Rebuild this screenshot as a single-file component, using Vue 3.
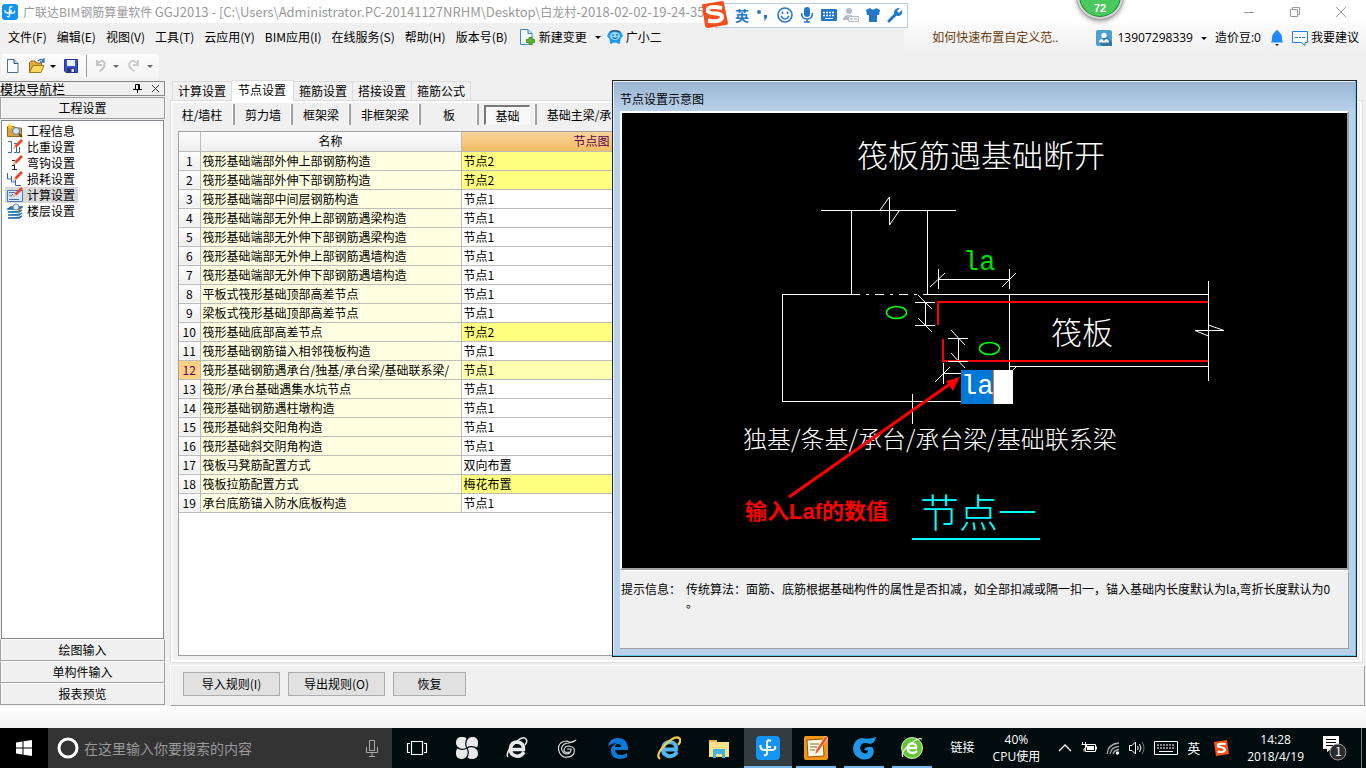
<script setup>
import { ref } from 'vue'

const menus = ['文件(F)', '编辑(E)', '视图(V)', '工具(T)', '云应用(Y)', 'BIM应用(I)', '在线服务(S)', '帮助(H)', '版本号(B)']
const navItems = ['工程信息', '比重设置', '弯钩设置', '损耗设置', '计算设置', '楼层设置']
const navButtons = ['绘图输入', '单构件输入', '报表预览']
const tabs = ['计算设置', '节点设置', '箍筋设置', '搭接设置', '箍筋公式']
const members = [
  { name: '柱/墙柱', size: 'm' },
  { name: '剪力墙', size: 'm' },
  { name: '框架梁', size: 'm' },
  { name: '非框架梁', size: 'l' },
  { name: '板', size: 'm' },
  { name: '基础', size: 'm', on: true },
  { name: '基础主梁/承台梁', size: 'xl' }
]
const rows = [
  ['筏形基础端部外伸上部钢筋构造', '节点2', 'hot'],
  ['筏形基础端部外伸下部钢筋构造', '节点2', 'hot'],
  ['筏形基础端部中间层钢筋构造', '节点1'],
  ['筏形基础端部无外伸上部钢筋遇梁构造', '节点1'],
  ['筏形基础端部无外伸下部钢筋遇梁构造', '节点1'],
  ['筏形基础端部无外伸上部钢筋遇墙构造', '节点1'],
  ['筏形基础端部无外伸下部钢筋遇墙构造', '节点1'],
  ['平板式筏形基础顶部高差节点', '节点1'],
  ['梁板式筏形基础顶部高差节点', '节点1'],
  ['筏形基础底部高差节点', '节点2', 'hot'],
  ['筏形基础钢筋锚入相邻筏板构造', '节点1'],
  ['筏形基础钢筋遇承台/独基/承台梁/基础联系梁/', '节点1', 'current'],
  ['筏形/承台基础遇集水坑节点', '节点1'],
  ['筏形基础钢筋遇柱墩构造', '节点1'],
  ['筏形基础斜交阳角构造', '节点1'],
  ['筏形基础斜交阴角构造', '节点1'],
  ['筏板马凳筋配置方式', '双向布置'],
  ['筏板拉筋配置方式', '梅花布置', 'hot'],
  ['承台底筋锚入防水底板构造', '节点1']
]
const anchor = ref('la')
const query = ref('')
</script>

<template>
  <div class="screen">
    <header class="title">
      <svg class="i16" viewBox="0 0 16 16"><rect width="16" height="16" rx="3" fill="#1494f0" /><path d="M10.500 3Q7.500 2 7.500 5V11Q7.500 13.500 5 12.500M3 6V7.500Q3.500 9 6 9H10.500Q13.500 9 12.500 6.500M7.500 7H10" fill="none" stroke="#fff" stroke-width="1.300" /></svg>
      <h1>广联达BIM钢筋算量软件 <span>GGJ2013 - [C:\Users\Administrator.PC-20141127NRHM\Desktop\</span>白龙村<span>-2018-02-02-19-24-35</span></h1>
      <div class="winbtns">
        <button aria-label="最小化"><svg viewBox="0 0 12 12"><path d="M1 6.500H11" /></svg></button>
        <button aria-label="还原"><svg viewBox="0 0 12 12"><path d="M1.500 3.500H8.500V10.500H1.500ZM3.500 3V1.500H10.500V8.500H9" /></svg></button>
        <button aria-label="关闭"><svg viewBox="0 0 12 12"><path d="M1 1 11 11M11 1 1 11" /></svg></button>
      </div>
    </header>

    <nav class="menubar">
      <button v-for="m in menus" :key="m">{{ m }}</button>
      <button class="withicon change">
        <svg class="i16" viewBox="0 0 16 16"><path d="M1.500.500H9L13 4.500V15.500H1.500Z" fill="#f2f9fe" stroke="#3b87b7" /><path d="M9 .500V4.500H13" fill="#c8e3f3" stroke="#3b87b7" /><path d="M8.500 9.500H14L13 15.500H8.500Z" fill="#f0f0f0" /><path d="M10 8.500h3v2h2.500v3H13v2.500h-3v-2.500H7.500v-3H10Z" fill="#5bb82b" stroke="#338716" stroke-width=".800" /></svg>
        新建变更<i class="caret"></i>
      </button>
      <button class="withicon">
        <svg class="i16" viewBox="0 0 16 16"><path d="M2 3Q8-1 14 3L16 7 13.500 10 13 14Q12 16 10.500 14L8 13.500 5.500 14Q4 16 3 14L2.500 10L0 7Z" fill="#1e9bea" /><ellipse cx="8" cy="7" rx="5" ry="4" fill="#8fd7ff" /><path d="M3 3Q8 .500 13 3" stroke="#3b5c75" stroke-width="1.500" fill="none" /><path d="M6 5V7M10 5V7M5.500 8.500Q8 10.500 10.500 8.500" stroke="#14567e" fill="none" /></svg>
        广小二
      </button>
      <div class="account">
        <a href="#" class="tip">如何快速布置自定义范..</a>
        <button class="withicon user">
          <svg class="i16" viewBox="0 0 16 16"><rect width="16" height="16" rx="2" fill="#4aa0d0" /><path d="M10 6 16 12V16H6L3 12Z" fill="#32779e" /><circle cx="8" cy="5.500" r="2.700" fill="#fff" /><path d="M3 12.500Q3 9 6 9L8 11 10 9Q13 9 13 12.500Z" fill="#fff" /></svg>
          <span>13907298339</span><i class="caret"></i>
        </button>
        <span class="beans">造价豆:0</span>
        <svg class="bell" viewBox="0 0 14 16"><path d="M7 0Q9 1 9 2 12 4 12 8 12 11 13 12.500H1Q2 11 2 8 2 4 5 2 5 1 7 0Z" fill="#1e8af4" /><path d="M5 14H9L7 16Z" fill="#222" /></svg>
        <button class="withicon">
          <svg class="i16" viewBox="0 0 16 16"><path d="M.500 1.500H15.500V12.500H13V15.500L9.500 12.500H.500Z" fill="#fff" stroke="#2580df" /><path d="M3 7.500H6M7 7.500H9M10 7.500H13" stroke="#2580df" /></svg>
          我要建议
        </button>
      </div>
    </nav>

    <div class="toolrow">
      <div class="toolbar">
        <button aria-label="新建"><svg class="i16" viewBox="0 0 16 16"><path d="M2.500 1.500H9L13 5.500V14.500H2.500Z" fill="#f7fbff" stroke="#536b86" /><path d="M9 1.500V5.500H13" fill="#b8d5ef" stroke="#2f5279" /></svg></button>
        <button class="drop" aria-label="打开"><svg class="i18" viewBox="0 0 18 16"><path d="M1.500 14.500V4.500L3 3H7L8.500 5H13.500V7.500" fill="#e1ad32" stroke="#8b6a25" /><path d="M1.500 14.500 5 7.500H16L13 14.500Z" fill="#fbd75e" stroke="#a17822" /><path d="M10 3Q13 0 15.500 3M16 0V4H12" fill="none" stroke="#376da7" stroke-width="1.300" /></svg><i class="caret"></i></button>
        <button aria-label="保存"><svg class="i16" viewBox="0 0 16 16"><path d="M1.500 1.500H14.500V14.500H3L1.500 13Z" fill="#3a52c9" stroke="#263690" /><path d="M4 2H12V8H4Z" fill="#e9efff" /><path d="M4 10H12V15H4Z" fill="#27337d" /><path d="M8.500 11H11V14H8.500Z" fill="#dbe4ff" /></svg></button>
        <i class="bar"></i>
        <button class="drop off" aria-label="撤销"><svg class="i16" viewBox="0 0 16 16"><path d="M5 2V7H10M5 6.500Q10 0 12.500 5 13.500 10 7.500 13" fill="none" stroke="#c4c4c4" stroke-width="2" /></svg><i class="caret"></i></button>
        <button class="drop off" aria-label="重做"><svg class="i16" viewBox="0 0 16 16"><path d="M12 2V7H7M12 6.500Q7 0 3.500 5 2 10 8.500 13" fill="none" stroke="#cdcdcd" stroke-width="2" /></svg><i class="caret"></i></button>
      </div>
    </div>

    <main class="work">
      <aside class="side">
        <div class="sidehead"><span>模块导航栏</span>
          <svg class="pin" viewBox="0 0 9 9"><path d="M2.500 5V.500H6.500V5M5.500 1V5M0 5.500H9M4.500 6V9" stroke="#000" fill="none" /></svg>
          <svg class="pin" viewBox="0 0 9 9"><path d="M1 1 8 8M8 1 1 8" stroke="#333" fill="none" /></svg>
        </div>
        <button class="navbtn">工程设置</button>
        <ul class="navlist">
          <li v-for="(n, i) in navItems" :key="n" :class="{ on: i === 4 }">
            <button>
              <svg class="i16" viewBox="0 0 16 16">
                <template v-if="i === 0"><path d="M.500 3.500H7L8.500 5H14.500V13.500H.500Z" fill="#dba53c" stroke="#8c6a2c" /><path d="M3 0V6M0 3H6M1 1 5 5M5 1 1 5" stroke="#ffd52c" /><circle cx="9" cy="8" r="3.500" fill="#cfe7ff" stroke="#5c718d" /><path d="M12 11 15 14" stroke="#5b4632" stroke-width="2" /></template>
                <template v-else-if="i === 1"><path d="M1 2.500H4.500V13.500H1M7 4.500H9.500V13.500H7M10 13.500H12.500V8" fill="none" stroke="#3767a8" /></template>
                <template v-else-if="i === 2"><path d="M5 5.500H8M7.500 8V15M5 10.500H8M5 14.500H10" fill="none" stroke="#222" /></template>
                <template v-else-if="i === 3"><path d="M.500 2V8H4M4.500 5V11H8M8.500 9V14.500H14" fill="none" stroke="#2f66b4" /></template>
                <template v-else-if="i === 4"><path d="M.500 3.500H15.500V14.500H.500Z" fill="#d8e9fb" stroke="#4878bd" /><path d="M2 5.500H8M2 7.500 4 9.500 6 7M2 12.500H12" stroke="#4072b5" fill="none" /></template>
                <template v-else><path d="M1 6 4 4H15L12 6ZM1 9H12L15 7M1 12H12L15 10M1 15H12L15 13" fill="#65b4e7" stroke="#19659e" stroke-width="1.500" /><circle cx="9" cy="4" r="3" fill="#dcecff" stroke="#7b8ea5" /><path d="M11 6 14 8" stroke="#a07650" stroke-width="2" /></template>
                <path v-if="i > 0 && i < 5" d="M6 10 8 6 14 0 16 2 10 8Z" fill="#e6442d" /><path v-if="i > 0 && i < 5" d="M6 10 7.500 6.500 9.500 8.500Z" fill="#edc894" />
              </svg>
              <span>{{ n }}</span>
            </button>
          </li>
        </ul>
        <button v-for="n in navButtons" :key="n" class="navbtn">{{ n }}</button>
      </aside>

      <section class="content">
        <div class="tabs">
          <button v-for="(t, i) in tabs" :key="t" :class="{ on: i === 1 }">{{ t }}</button>
        </div>
        <div class="panel">
          <div class="members">
            <button v-for="m in members" :key="m.name" :class="[m.size, { on: m.on }]"><span>{{ m.name }}</span></button>
          </div>
          <div class="gridbox">
            <table>
              <colgroup><col class="cnum" /><col class="cname" /><col class="cname" /></colgroup>
              <thead><tr><th></th><th>名称</th><th class="pick">节点图</th></tr></thead>
              <tbody>
                <tr v-for="(r, i) in rows" :key="i" :class="r[2]">
                  <th>{{ i + 1 }}</th><td class="name">{{ r[0] }}</td><td>{{ r[1] }}</td>
                </tr>
              </tbody>
            </table>
          </div>
        </div>
        <div class="actions">
          <button>导入规则(I)</button><button>导出规则(O)</button><button class="small">恢复</button>
        </div>
      </section>

      <section class="dialog" role="dialog" aria-label="节点设置示意图">
        <h2>节点设置示意图</h2>
        <div class="canvas">
          <svg class="cad" viewBox="622 113 725 454" preserveAspectRatio="xMinYMin meet">
            <g fill="none" stroke="#fff" stroke-width="1">
              <path shape-rendering="crispEdges" d="M821 210.500H956M889.500 197V225M851.500 211V294M927.500 211V294M851 294.500H782.500V401.500H961M851 294.500H860M866 294.500H869M875 294.500H884M890 294.500H893M899 294.500H908M914 294.500H917M923 294.500H1208M1009.500 294V370M1009 366.500H1208M1208.500 281V381M1195 330.500H1224M938.500 269V289M1009.500 269V289M938 279.500H1010M915 302.500H935M915 325.500H935M925.500 302V326M948 338.500H968M958.500 338V362M943.500 363V384M943 373.500H961M912.500 394V424" />
              <path d="M880 210 889.500 197M889.500 225 899 211M1195 330.500 1208.500 336M1208.500 325 1224 330.500M930 287 945 273M1002 287 1016 273M918 295 932 309M918 318 932 332M951 330 965 345M951 353 965 368M935 382 950 367M1012 371 1016 367" />
            </g>
            <path d="M938 325V302H1208M943 339V361H1208" fill="none" stroke="#f00" stroke-width="2" shape-rendering="crispEdges" />
            <path d="M948 361.500H968" stroke="#fff" shape-rendering="crispEdges" />
            <g fill="none" stroke="#0f0" stroke-width="1.500"><ellipse cx="896.500" cy="312.500" rx="10" ry="6" /><ellipse cx="989.500" cy="348.500" rx="10" ry="6" /></g>
            <text class="t31" x="857" y="167">筏板筋遇基础断开</text>
            <text class="t31" x="1051" y="344">筏板</text>
            <text class="t24" x="743" y="448">独基/条基/承台/承台梁/基础联系梁</text>
            <text class="la" x="963" y="270">la</text>
            <text class="t39" x="920" y="527">节点一</text>
            <path d="M912 539H1040" stroke="#0ff" stroke-width="2" />
            <path d="M789 497 950 384" stroke="#f00" stroke-width="3" />
            <path d="M960 377 946 381 953 391Z" fill="#f00" />
            <text class="red" x="745" y="519">输入Laf的数值</text>
            <foreignObject x="961" y="370" width="52" height="34"><input v-model="anchor" class="anchor" aria-label="锚固长度" /></foreignObject>
          </svg>
        </div>
        <div class="info"><span>提示信息：</span><p>传统算法：面筋、底筋根据基础构件的属性是否扣减，如全部扣减或隔一扣一，锚入基础内长度默认为la,弯折长度默认为0<br />。</p></div>
      </section>
    </main>

    <div class="desk"></div>

    <footer class="taskbar">
      <button class="start" aria-label="开始"><svg class="i16" viewBox="0 0 16 16"><path d="M0 2.500 6.500 1.500V7.500H0ZM7.500 1.300 16 0V7.500H7.500ZM0 8.500H6.500V14.500L0 13.500ZM7.500 8.500H16V16L7.500 14.700Z" fill="#fff" /></svg></button>
      <label class="search">
        <svg class="i22" viewBox="0 0 22 22"><circle cx="11" cy="11" r="9" fill="none" stroke="#fff" stroke-width="3" /></svg>
        <input v-model="query" placeholder="在这里输入你要搜索的内容" aria-label="搜索" />
        <svg class="mic" viewBox="0 0 12 17"><path d="M3.500.500H8.500V10.500H3.500ZM.500 7V12.500H11.500V7M6 13V16.500M3 16.500H9" fill="none" stroke="#aaa" /></svg>
      </label>
      <div class="apps">
        <button aria-label="任务视图"><svg class="i22" viewBox="0 0 22 22"><path d="M5.500 4.500H16.500V17.500H5.500ZM4 6.500H1.500V15.500H4M18 6.500H20.500V15.500H18" fill="none" stroke="#fff" stroke-width="1.200" /></svg></button>
        <button aria-label="风车"><svg class="i22" viewBox="0 0 22 22"><g fill="#e9e9e9"><rect x="0" y="0" width="12" height="11" rx="5" /><rect x="11" y="0" width="11" height="12" rx="5" /><rect x="10" y="11" width="12" height="11" rx="5" /><rect x="0" y="10" width="11" height="12" rx="5" /><path d="M6 6H16V16H6Z" /></g><path d="M11 11Q8 6 12 0M11 11Q16 8 22 12M11 11Q14 16 10 22M11 11Q6 14 0 10" fill="none" stroke="#010c0f" stroke-width="1.200" /></svg></button>
        <button aria-label="浏览器"><svg class="i22" viewBox="0 0 22 22"><path d="M18 15Q15 20 10 19 4 18 4.500 11.500 5 5 11.500 5 18 6 17.500 12.500H6" fill="none" stroke="#e9e9e9" stroke-width="3.500" /><path d="M2 20Q-1 16 8 7T20 2Q22 4 19 8" fill="none" stroke="#e9e9e9" stroke-width="1.500" /></svg></button>
        <button aria-label="广联达"><svg class="i22" viewBox="0 0 22 22"><path d="M20 3Q16 7 11 4 4 4 2.500 10 2 17 8 20 16 21 18 16 20 10 13 9 8 9 8 14 9 16 13 15M18 4 13 6Q7 6 5.500 11 6 16 10 17 15 17 15 12H11" fill="none" stroke="#ddd" stroke-width="1.200" /></svg></button>
        <button class="edge" aria-label="Edge"><svg class="i22" viewBox="0 0 22 22"><path d="M1 10Q2 1 11 1 21 1 21 13H8Q9 18 14 18 18 18 20 16V20Q17 22 12 22 3 21 4 12 5 8 10 6 4 6 1 10ZM8 10H14Q14 7 11 7T8 10Z" fill="#0b79d5" fill-rule="evenodd" /></svg></button>
        <button aria-label="Internet Explorer"><svg class="i24" viewBox="0 0 24 24"><path d="M20 16Q17 21 11 20 5 18 6 12 7 6 13 6 20 7 19 13.500H7" fill="none" stroke="#54b4ef" stroke-width="4" /><path d="M3 23Q-2 19 8 9T22 2Q25 4 21 9" fill="none" stroke="#f5ce42" stroke-width="2.200" /></svg></button>
        <button aria-label="资源管理器"><svg class="i22" viewBox="0 0 22 22"><path d="M1 3H9V5H21V20H1Z" fill="#fbe08a" /><path d="M1 3H9V5H1Z" fill="#e9b43e" /><path d="M5 12H17V21H14V17H8V21H5Z" fill="#3fb3e4" /></svg></button>
        <button class="run active" aria-label="钢筋算量"><svg class="i24" viewBox="0 0 24 24"><rect width="24" height="24" rx="4" fill="#1494f5" /><path d="M15 5Q11 3 11 7V17Q11 20 8 19M4.500 9V11Q5 14 9 14H16Q20 14 19 10M11 11H15" fill="none" stroke="#fff" stroke-width="2" /></svg></button>
        <button class="run" aria-label="便笺"><svg class="i24" viewBox="0 0 24 24"><rect width="24" height="24" rx="2" fill="#f19716" /><path d="M3 4 19 3 20 20 4 21Z" fill="#fff8dc" stroke="#964f10" /><path d="M6 8H15M6 11H13M6 14H11" stroke="#7e6a50" /><path d="M24 2 14 16 11 19 12 14 21 0Z" fill="#ee5627" stroke="#fff" stroke-width=".500" /></svg></button>
        <button class="run" aria-label="广联达云"><svg class="i24" viewBox="0 0 24 24"><path d="M24 1Q23 7 18 8 9 5 8 12 9 17 13 17.500 16 17 16 14.500L12 14Q14 10 20 11 23 14 21 19 17 25 9 23 1 20 1 12 2 3 10 2 16 4 24 1Z" fill="#2296e6" /></svg></button>
        <button class="run" aria-label="安全浏览器"><svg class="i22" viewBox="0 0 22 22"><circle cx="11" cy="11" r="10.500" fill="#67c637" stroke="#d5f2bc" /><path d="M16 14Q13 17 9.500 15.500 6 14 7 10 8 6 12 6.500 16 8 15 11H8" fill="none" stroke="#fff" stroke-width="2.300" /><path d="M2 20Q-1 16 8 8T21 2" fill="none" stroke="#f5fff0" stroke-width="1.200" /></svg></button>
      </div>
      <div class="tray">
        <span class="links">链接</span>
        <span class="cpu">40%<br />CPU使用</span>
        <svg class="i14" viewBox="0 0 14 14"><path d="M1 10 7 4 13 10" fill="none" stroke="#fff" stroke-width="1.300" /></svg>
        <svg class="i16" viewBox="0 0 16 16"><path d="M4.500 4.500H14.500V11.500H4.500ZM15.500 6.500V9.500M1.500 2V4M4.500 2V4M.500 4.500H5.500V7L3 9V11.500" fill="none" stroke="#fff" /><path d="M6 6H13V10H6Z" fill="#fff" /></svg>
        <svg class="i14" viewBox="0 0 14 14"><path d="M1 13Q2 3 13 2M4 13Q5 6 13 5.500M7 13Q8 9 13 8.500" fill="none" stroke="#aaa" stroke-width="1.300" /><circle cx="11.500" cy="12" r="1.700" fill="#fff" /></svg>
        <svg class="i16" viewBox="0 0 16 16"><path d="M.500 5.500H3L6.500 2V14L3 10.500H.500ZM8.500 6Q10 8 8.500 10M10.500 4Q13.500 8 10.500 12" fill="none" stroke="#fff" /><path d="M13 2Q17 8 13 14" fill="none" stroke="#777" /></svg>
        <svg class="kbd" viewBox="0 0 24 14"><path d="M.500.500H23.500V13.500H.500Z" fill="none" stroke="#fff" /><path d="M3 4H21M3 7H21" stroke="#fff" stroke-dasharray="2 1" /><path d="M5 10.500H19" stroke="#fff" /></svg>
        <span class="ime">英</span>
        <svg class="i16" viewBox="0 0 16 16"><path d="M1 2 14 0 16 14 3 16Z" fill="#f5531c" /><path d="M12.500 4Q4 3 5 6.500 12 7.500 12 10 11 13 4.500 11.500" fill="none" stroke="#fff" stroke-width="2.200" /></svg>
        <span class="clock">14:28<br />2018/4/19</span>
        <svg class="note" viewBox="0 0 26 26"><path d="M1 1H17V14H9L5 17V14H1Z" fill="#fff" /><path d="M4 4.500H14M4 7.500H14M4 10.500H14" stroke="#000" /><circle cx="16" cy="17" r="8" fill="#2b2b2b" stroke="#999" /><text x="13" y="21">1</text></svg>
        <i class="peek"></i>
      </div>
    </footer>

    <div class="ball">72</div>
    <div class="sogou">
      <svg class="slogo" viewBox="0 0 28 28"><path d="M1 4Q1 3 3 3L21 0Q23 0 23 2L27 22Q27 24 25 24L7 27Q5 27 4 25Z" fill="#f0501e" /><path d="M21 7Q5 4 7 10.500 8 12 15 12.500 22 13 21 17 18 22 7 19.500" fill="none" stroke="#fff" stroke-width="4" /></svg>
      <b>英</b>
      <svg class="i16" viewBox="0 0 16 16"><circle cx="4" cy="5" r="2" fill="#2277c9" /><path d="M9 8H12V11L9 14Q10 12 9 10Z" fill="#2277c9" /></svg>
      <svg class="i16" viewBox="0 0 16 16"><circle cx="8" cy="8" r="7" fill="none" stroke="#2277c9" stroke-width="1.600" /><path d="M5.500 4.500V7M10.500 4.500V7M4 9Q8 15 12 9" fill="none" stroke="#2277c9" stroke-width="1.500" /></svg>
      <svg class="i16" viewBox="0 0 16 16"><rect x="5" y="0" width="6" height="10" rx="3" fill="#2277c9" /><path d="M2.500 6Q2.500 12 8 12T13.500 6M8 12V15M5 15H11" fill="none" stroke="#2277c9" stroke-width="1.500" /></svg>
      <svg class="i16" viewBox="0 0 16 16"><rect y="2" width="16" height="12" rx="1" fill="#2277c9" /><path d="M2 5.500H14M2 8.500H14" stroke="#fff" stroke-width="1.500" stroke-dasharray="2 1" /><path d="M4 11.500H12" stroke="#fff" /></svg>
      <svg class="i16" viewBox="0 0 16 16"><circle cx="6" cy="4" r="3" fill="#b0bccb" /><path d="M0 13Q0 8 6 8T11 13Z" fill="#b0bccb" /><path d="M5.500 9.500H15.500V14.500H5.500Z" fill="#fff" stroke="#b0bccb" /><path d="M7 12H10M11 12H14" stroke="#9aa8b8" /></svg>
      <svg class="i16" viewBox="0 0 16 16"><path d="M1 3 5 1Q8 4 11 1L15 3 14 8H12V15H4V8H2Z" fill="#2277c9" /></svg>
      <svg class="i16" viewBox="0 0 16 16"><path d="M2 14 9 7" stroke="#2277c9" stroke-width="3" stroke-linecap="round" /><path d="M13 1 10 4 12 6 15 3Q16 8 12 9 8 9 7 6 7 1 13 1Z" fill="#2277c9" /></svg>
    </div>
  </div>
</template>

<style>
body { margin: 0; background: #f0f0f0; }
</style>

<style scoped>
* { box-sizing: border-box; }
.screen { position: relative; min-height: 100vh; display: flex; flex-direction: column; overflow: hidden; background: #f0f0f0; color: #000; font: 12px/16px "Noto Sans CJK SC", sans-serif; }
button { font: inherit; color: inherit; background: none; border: 0; padding: 0; white-space: nowrap; }
svg { flex: none; display: block; }
.i14 { width: 14px; height: 14px; }
.i16 { width: 16px; height: 16px; }
.i18 { width: 18px; height: 16px; }
.i22 { width: 22px; height: 22px; }
.i24 { width: 24px; height: 24px; }
.caret { border: 3px solid transparent; border-top-color: #000; border-bottom: 0; }

.title { height: 23px; background: #fff; display: flex; align-items: center; padding-left: 2px; gap: 5px; }
.title h1 { margin: 0; font: 12px/16px "Noto Sans CJK SC", sans-serif; color: #999; white-space: nowrap; flex: 1; min-width: 0; overflow: hidden; }
.title h1 span { font-size: 13px; }
.winbtns { display: flex; gap: 34px; margin-right: 19px; }
.winbtns svg { width: 12px; height: 12px; fill: none; stroke: #999; }

.menubar { height: 28px; display: flex; align-items: center; gap: 10px; padding-left: 8px; }
.withicon { display: flex; align-items: center; gap: 3px; }
.change { gap: 4px; margin-left: 1px; }
.change .caret { margin-left: 4px; }
.menubar > .withicon + .withicon { margin-left: -4px; }
.account { margin-left: auto; align-self: stretch; display: flex; align-items: center; padding: 2px 7px 0 28px; font-family: "Open Sans", "Noto Sans CJK SC", sans-serif; background: linear-gradient(#fcfcfc, #f0f0f0); }
.tip { color: #6b3a0c; text-decoration: none; margin-right: 38px; }
.user { gap: 5px; margin-right: 8px; }
.user .caret { margin-left: 3px; }
.beans { margin-right: 9px; }
.bell { width: 14px; height: 16px; margin-right: 8px; }

.toolrow { height: 30px; padding: 3px 0 0 1px; }
.toolbar { display: inline-flex; align-items: center; height: 24px; padding: 0 6px 0 4px; gap: 7px; background: linear-gradient(#fcfcfc, #f4f4f4); }
.drop { display: flex; align-items: center; gap: 4px; }
.off { gap: 5px; }
.off .caret { border-top-color: #666; }
.bar { width: 1px; height: 22px; background: #999; margin-right: -2px; }

.work { flex: 1; display: flex; gap: 5px; position: relative; }
.side { width: 165px; display: flex; flex-direction: column; padding-bottom: 1px; }
.sidehead { height: 15px; border: 1px solid #888; border-left: 0; display: flex; align-items: center; gap: 9px; padding-right: 4px; line-height: 13px; font-size: 13px; }
.sidehead span { flex: 1; white-space: nowrap; }
.pin { width: 9px; height: 9px; }
.navbtn { height: 22px; border: 1px solid #a0a0a0; border-top-color: #fff; box-shadow: inset 1px 0 #fff; }
.sidehead + .navbtn { margin: 1px 0; border-top-color: #a0a0a0; }
.navlist { flex: 1; margin: 0 1px; padding: 2px 0; list-style: none; background: #fff; border: 1px solid #828790; }
.navlist button { display: flex; align-items: center; gap: 4px; height: 16px; margin-left: 3px; padding: 0 3px 0 2px; }
.navlist .on button { background: #d9d9d9; }

.content { flex: 1; min-width: 0; display: flex; flex-direction: column; }
.tabs { display: flex; align-items: flex-end; height: 20px; margin: -1px 0 0 2px; }
.tabs button { height: 19px; padding: 0 5px; border: 1px solid #dcdcdc; border-left: 0; border-bottom: 0; line-height: 18px; }
.tabs button:first-child { border-left: 1px solid #dcdcdc; }
.tabs .on { height: 21px; margin-bottom: -1px; padding: 0 7px 3px 6px; background: #fff; z-index: 1; line-height: 17px; }
.panel { flex: 1; margin-right: 3px; border: 1px solid #dcdcdc; outline: 2px solid #fff; outline-offset: -3px; display: flex; flex-direction: column; padding: 3px 7px 6px; }
.members { display: flex; height: 21px; margin-left: -3px; overflow: hidden; }
.members button { flex: none; width: 58px; border-right: 2px solid #a0a0a0; box-shadow: inset -1px 0 #fff; }
.members button:first-child { width: 60px; padding-right: 4px; }
.members .l { width: 70px; }
.members .xl { width: 110px; }
.members .on { padding: 0 5px; }
.members .on span { display: block; border: 1px solid #f8f8f8; border-top: 2px solid #777; border-left: 2px solid #777; background: #f8f8f8; line-height: 17px; }
.gridbox { flex: 1; margin-top: 6px; border: 1px solid #a0a0a0; background: #fff; overflow: hidden; }
table { border-collapse: collapse; table-layout: fixed; width: 543px; }
.cnum { width: 21px; }
.cname { width: 261px; }
th, td { height: 19px; padding: 0 0 0 2px; line-height: 18px; border-right: 1px solid #bcbcbc; border-bottom: 1px solid #bcbcbc; white-space: nowrap; overflow: hidden; font-weight: 400; text-align: left; }
th { background: linear-gradient(#fdfdfd, #eee); text-align: center; padding: 0; }
.pick { background: linear-gradient(#f9d39a, #f0bd62); color: #5b0058; }
.name { background: #ffffe1; }
.hot td:last-child { background: #ffff80; }
.current td:last-child { background: #ffffb0; }
.current th { background: #ffd085; color: #5b0058; }
.actions { height: 41px; margin: 2px 1px 0 0; padding: 6px 0 0 12px; border: 1px solid #fff; border-right-color: #a0a0a0; border-bottom-color: #a0a0a0; display: flex; gap: 8px; }
.actions button { width: 97px; height: 24px; background: #e1e1e1; border: 1px solid #adadad; }
.actions .small { width: 73px; }

.dialog { position: absolute; left: 612px; right: 9px; top: -1px; bottom: 49px; z-index: 2; display: flex; flex-direction: column; padding: 0 7px 7px; border: 1px solid #222; box-shadow: inset -1px -1px #5dc8e8, inset 1px 1px #e8f2fb; background: linear-gradient(#99b4d1, #b9d1ea 30px); }
.dialog h2 { margin: 0; padding: 10px 0 0; height: 30px; font-size: 12px; line-height: 16px; font-weight: 400; }
.canvas { flex: 1; min-height: 0; background: #000; border: 2px solid #fff; border-right-color: #a0a0a0; border-bottom-color: #a0a0a0; }
.cad { width: 100%; height: 100%; font-weight: 300; fill: #fff; }
.t31 { font-size: 31px; }
.t24 { font-size: 24px; }
.t39 { font-size: 39px; fill: #0ff; }
.la { font: 27px "Liberation Mono", monospace; fill: #00e000; }
.red { font: bold 22px "Liberation Sans", "Noto Sans CJK SC", sans-serif; fill: #f00; }
.anchor { display: block; width: 52px; height: 34px; border: 0; padding: 0; background: linear-gradient(90deg, #0078d7 32px, #e87d2f 32px, #e87d2f 33px, #fff 33px); color: #fff; font: 27px "Liberation Mono", monospace; outline: 0; }
.info { height: 79px; background: #f0f0f0; border: 1px solid #a0a0a0; border-left: 0; border-top-color: #fff; padding: 11px 0 0 1px; display: flex; gap: 5px; line-height: 14px; overflow: hidden; white-space: nowrap; }
.info p { margin: 0; }

.desk { height: 22px; background: linear-gradient(#fff, #f0f0f0); }

.taskbar { height: 40px; display: flex; background: #010c0f; color: #fff; }
.taskbar button { display: grid; place-items: center; }
.start { width: 48px; background: #000; }
.search { width: 344px; background: #333; display: flex; align-items: center; padding: 0 14px 0 9px; gap: 5px; }
.search input { flex: 1; min-width: 0; background: none; border: 0; outline: 0; padding: 0; font: 14px "Noto Sans CJK SC", sans-serif; color: #fff; }
.search input::placeholder { color: #999; opacity: 1; }
.mic { width: 12px; height: 17px; }
.apps { display: flex; }
.apps button { width: 50px; }
.apps .edge { width: 52px; }
.apps .run { width: 40px; margin: 0 4px; border-bottom: 2px solid #76b9ed; padding-top: 2px; }
.apps .active { width: 48px; margin: 0; background: #333d40; }
.tray { margin-left: auto; display: flex; align-items: center; gap: 9px; font-family: "Open Sans", "Noto Sans CJK SC", sans-serif; }
.links { margin-right: 9px; }
.cpu, .clock { text-align: center; line-height: 17px; white-space: nowrap; }
.cpu { margin-right: 9px; }
.kbd { width: 24px; height: 14px; }
.ime { font-size: 13px; margin-right: 4px; }
.clock { margin: 0 9px; }
.note { width: 26px; height: 26px; margin-right: 4px; }
.note text { font: 12px "Noto Sans CJK SC", sans-serif; fill: #fff; }
.peek { width: 5px; height: 40px; border-left: 1px solid #777; }

.ball { position: absolute; left: 1077px; top: -27px; width: 46px; height: 46px; border-radius: 50%; border: 2px solid #d6d6d6; outline: 1px solid #aaa; box-shadow: inset 0 0 0 1px #168035, 0 2px 5px #888; background: #48c95c; color: #fff; display: flex; justify-content: center; align-items: flex-end; padding-bottom: 3px; font: bold 11px/12px "Liberation Sans", sans-serif; }
.sogou { position: absolute; left: 701px; top: 0; z-index: 3; height: 29px; width: 207px; display: flex; align-items: center; gap: 6px; }
.sogou::before { content: ""; position: absolute; left: 14px; right: 0; top: 3px; height: 23px; background: #fff; border: 1px solid #b8cbe0; z-index: -1; }
.slogo { width: 28px; height: 28px; }
.sogou b { font-size: 14px; color: #2277c9; }
</style>
